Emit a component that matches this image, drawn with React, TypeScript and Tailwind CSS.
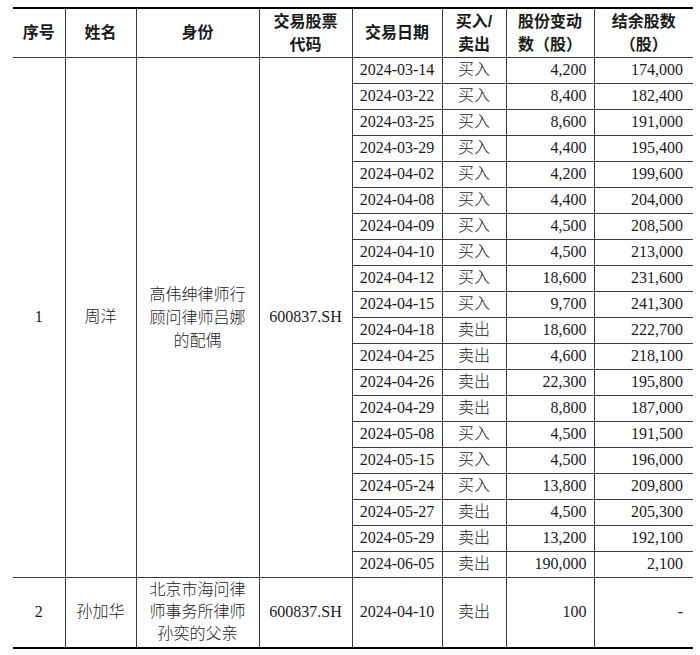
const trades: [string, string, string, string][] = [
  ['2024-03-14', '买入', '4,200', '174,000'],
  ['2024-03-22', '买入', '8,400', '182,400'],
  ['2024-03-25', '买入', '8,600', '191,000'],
  ['2024-03-29', '买入', '4,400', '195,400'],
  ['2024-04-02', '买入', '4,200', '199,600'],
  ['2024-04-08', '买入', '4,400', '204,000'],
  ['2024-04-09', '买入', '4,500', '208,500'],
  ['2024-04-10', '买入', '4,500', '213,000'],
  ['2024-04-12', '买入', '18,600', '231,600'],
  ['2024-04-15', '买入', '9,700', '241,300'],
  ['2024-04-18', '卖出', '18,600', '222,700'],
  ['2024-04-25', '卖出', '4,600', '218,100'],
  ['2024-04-26', '卖出', '22,300', '195,800'],
  ['2024-04-29', '卖出', '8,800', '187,000'],
  ['2024-05-08', '买入', '4,500', '191,500'],
  ['2024-05-15', '买入', '4,500', '196,000'],
  ['2024-05-24', '买入', '13,800', '209,800'],
  ['2024-05-27', '卖出', '4,500', '205,300'],
  ['2024-05-29', '卖出', '13,200', '192,100'],
  ['2024-06-05', '卖出', '190,000', '2,100'],
]

const line = 'border-[#3a3a3a]'
const th = `border-b border-r ${line} p-0 text-center align-middle font-bold leading-[23px]`
const td = `border-b border-r ${line} p-0 align-middle`

export default function App() {
  return (
    <div className="bg-white w-[700px] h-[655px] pt-[7px] pl-[13px] text-[16px] text-[#1a1a1a] font-['Liberation_Serif','Noto_Sans_CJK_SC',serif]">
      <div className="w-[680px] border-y-2 border-black">
        <table className="w-full table-fixed border-collapse">
          <colgroup>
            <col className="w-[52px]" />
            <col className="w-[71px]" />
            <col className="w-[123px]" />
            <col className="w-[93px]" />
            <col className="w-[90px]" />
            <col className="w-[64px]" />
            <col className="w-[88px]" />
            <col className="w-[99px]" />
          </colgroup>
          <thead className="font-['Liberation_Sans','Noto_Sans_CJK_SC',sans-serif]">
            <tr className="h-[48px]">
              <th className={th}>序号</th>
              <th className={th}>姓名</th>
              <th className={th}>身份</th>
              <th className={th}>交易股票<br />代码</th>
              <th className={th}>交易日期</th>
              <th className={th}>买入/<br />卖出</th>
              <th className={th}>股份变动<br />数（股）</th>
              <th className={`border-b ${line} p-0 text-center align-middle font-bold leading-[23px]`}>结余股数<br />（股）</th>
            </tr>
          </thead>
          <tbody>
            {trades.map(([date, side, change, balance], i) => (
              <tr key={date} className="h-[26px]">
                {i === 0 && (
                  <>
                    <td rowSpan={20} className={`${td} text-center`}>1</td>
                    <td rowSpan={20} className={`${td} text-center font-light`}>周洋</td>
                    <td rowSpan={20} className={`${td} text-center font-light leading-[23px]`}>
                      高伟绅律师行<br />顾问律师吕娜<br />的配偶
                    </td>
                    <td rowSpan={20} className={`${td} text-center`}>600837.SH</td>
                  </>
                )}
                <td className={`${td} text-center`}>{date}</td>
                <td className={`${td} text-center font-light`}>{side}</td>
                <td className={`${td} text-right pr-[7px]`}>{change}</td>
                <td className={`border-b ${line} p-0 align-middle text-right pr-[10px]`}>{balance}</td>
              </tr>
            ))}
            <tr className="h-[70px]">
              <td className="border-r border-[#3a3a3a] p-0 text-center align-middle">2</td>
              <td className="border-r border-[#3a3a3a] p-0 text-center align-middle font-light">孙加华</td>
              <td className="border-r border-[#3a3a3a] p-0 text-center align-middle font-light leading-[22px]">
                北京市海问律<br />师事务所律师<br />孙奕的父亲
              </td>
              <td className="border-r border-[#3a3a3a] p-0 text-center align-middle">600837.SH</td>
              <td className="border-r border-[#3a3a3a] p-0 text-center align-middle">2024-04-10</td>
              <td className="border-r border-[#3a3a3a] p-0 text-center align-middle font-light">卖出</td>
              <td className="border-r border-[#3a3a3a] p-0 text-right align-middle pr-[7px]">100</td>
              <td className="p-0 text-right align-middle pr-[10px]">-</td>
            </tr>
          </tbody>
        </table>
      </div>
    </div>
  )
}
